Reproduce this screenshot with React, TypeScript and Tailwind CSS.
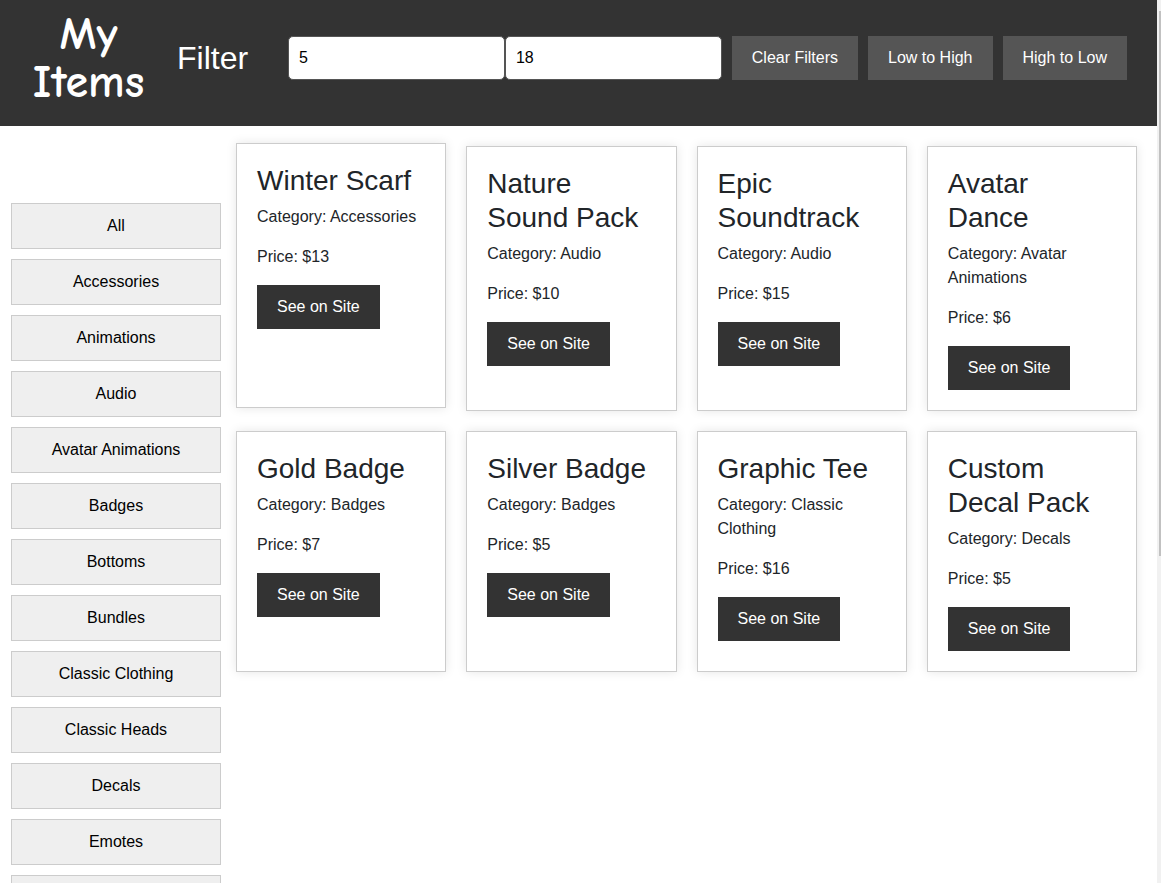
import { useState } from "react";

const categories = [
  "All",
  "Accessories",
  "Animations",
  "Audio",
  "Avatar Animations",
  "Badges",
  "Bottoms",
  "Bundles",
  "Classic Clothing",
  "Classic Heads",
  "Decals",
  "Emotes",
  "Faces",
];

type Item = { name: string; category: string; price: number; raised?: boolean };

const items: Item[] = [
  { name: "Winter Scarf", category: "Accessories", price: 13, raised: true },
  { name: "Nature Sound Pack", category: "Audio", price: 10 },
  { name: "Epic Soundtrack", category: "Audio", price: 15 },
  { name: "Avatar Dance", category: "Avatar Animations", price: 6 },
  { name: "Gold Badge", category: "Badges", price: 7 },
  { name: "Silver Badge", category: "Badges", price: 5 },
  { name: "Graphic Tee", category: "Classic Clothing", price: 16 },
  { name: "Custom Decal Pack", category: "Decals", price: 5 },
];

function HeaderButton({ label }: { label: string }) {
  return (
    <button type="button" className="h-11 shrink-0 bg-[#555] px-5 text-white">
      {label}
    </button>
  );
}

function PriceInput({ label, initial }: { label: string; initial: string }) {
  const [value, setValue] = useState(initial);
  return (
    <input
      type="text"
      inputMode="numeric"
      aria-label={label}
      value={value}
      onChange={(e) => setValue(e.target.value)}
      className="h-11 w-0 min-w-0 flex-1 rounded-[5px] border border-[#555] bg-white px-[10px] text-black outline-none"
    />
  );
}

function Card({ item }: { item: Item }) {
  return (
    <article
      className={
        "border border-[#ccc] bg-white p-5 shadow-[0_0_10px_rgba(0,0,0,0.1)] " +
        (item.raised ? "-translate-y-[3px]" : "")
      }
    >
      <h3 className="mb-[7px] text-[28px] leading-[34px]">{item.name}</h3>
      <p className="mb-4">Category: {item.category}</p>
      <p className="mb-4">Price: ${item.price}</p>
      <button type="button" className="h-11 bg-[#333] px-5 text-white">
        See on Site
      </button>
    </article>
  );
}

export default function App() {
  return (
    <div className="flex h-screen overflow-hidden bg-white font-['Liberation_Sans',Arial,sans-serif] text-base text-[#212529]">
      <div className="min-w-0 flex-1 overflow-y-auto [scrollbar-width:none]">
        <header className="flex items-center bg-[#333] pb-[19px] pl-[30px] pr-[30px] pt-[11px] text-white">
          <h1 className="mr-[30px] w-[117px] shrink-0 text-center font-['Comic_Sans_MS','Comic_Neue',cursive] text-[46px] leading-[48px] font-bold">
            My Items
          </h1>
          <div className="flex min-w-0 flex-1 items-center pb-[2px]">
            <h2 className="mr-10 shrink-0 text-[32px] leading-10">Filter</h2>
            <div className="flex min-w-0 flex-1 items-center gap-[10px]">
              <div className="flex min-w-0 flex-1">
                <PriceInput label="Minimum price" initial="5" />
                <PriceInput label="Maximum price" initial="18" />
              </div>
              <HeaderButton label="Clear Filters" />
              <HeaderButton label="Low to High" />
              <HeaderButton label="High to Low" />
            </div>
          </div>
        </header>
        <div className="flex items-start gap-[15px] pl-[11px] pr-5">
          <nav aria-label="Categories" className="flex w-[210px] shrink-0 flex-col gap-[10px] pb-5 pt-[77px]">
            {categories.map((name) => (
              <button
                key={name}
                type="button"
                className="h-[46px] border border-[#ccc] bg-[#efefef] text-black"
              >
                {name}
              </button>
            ))}
          </nav>
          <main className="grid min-w-0 flex-1 grid-cols-4 gap-5 py-5">
            {items.map((item) => (
              <Card key={item.name} item={item} />
            ))}
          </main>
        </div>
      </div>
      <div aria-hidden="true" className="flex w-1 shrink-0 flex-col items-end bg-[#f1f1f1] pt-[11px]">
        <div className="h-[62.5%] w-0.5 bg-[#c1c1c1]" />
      </div>
    </div>
  );
}
